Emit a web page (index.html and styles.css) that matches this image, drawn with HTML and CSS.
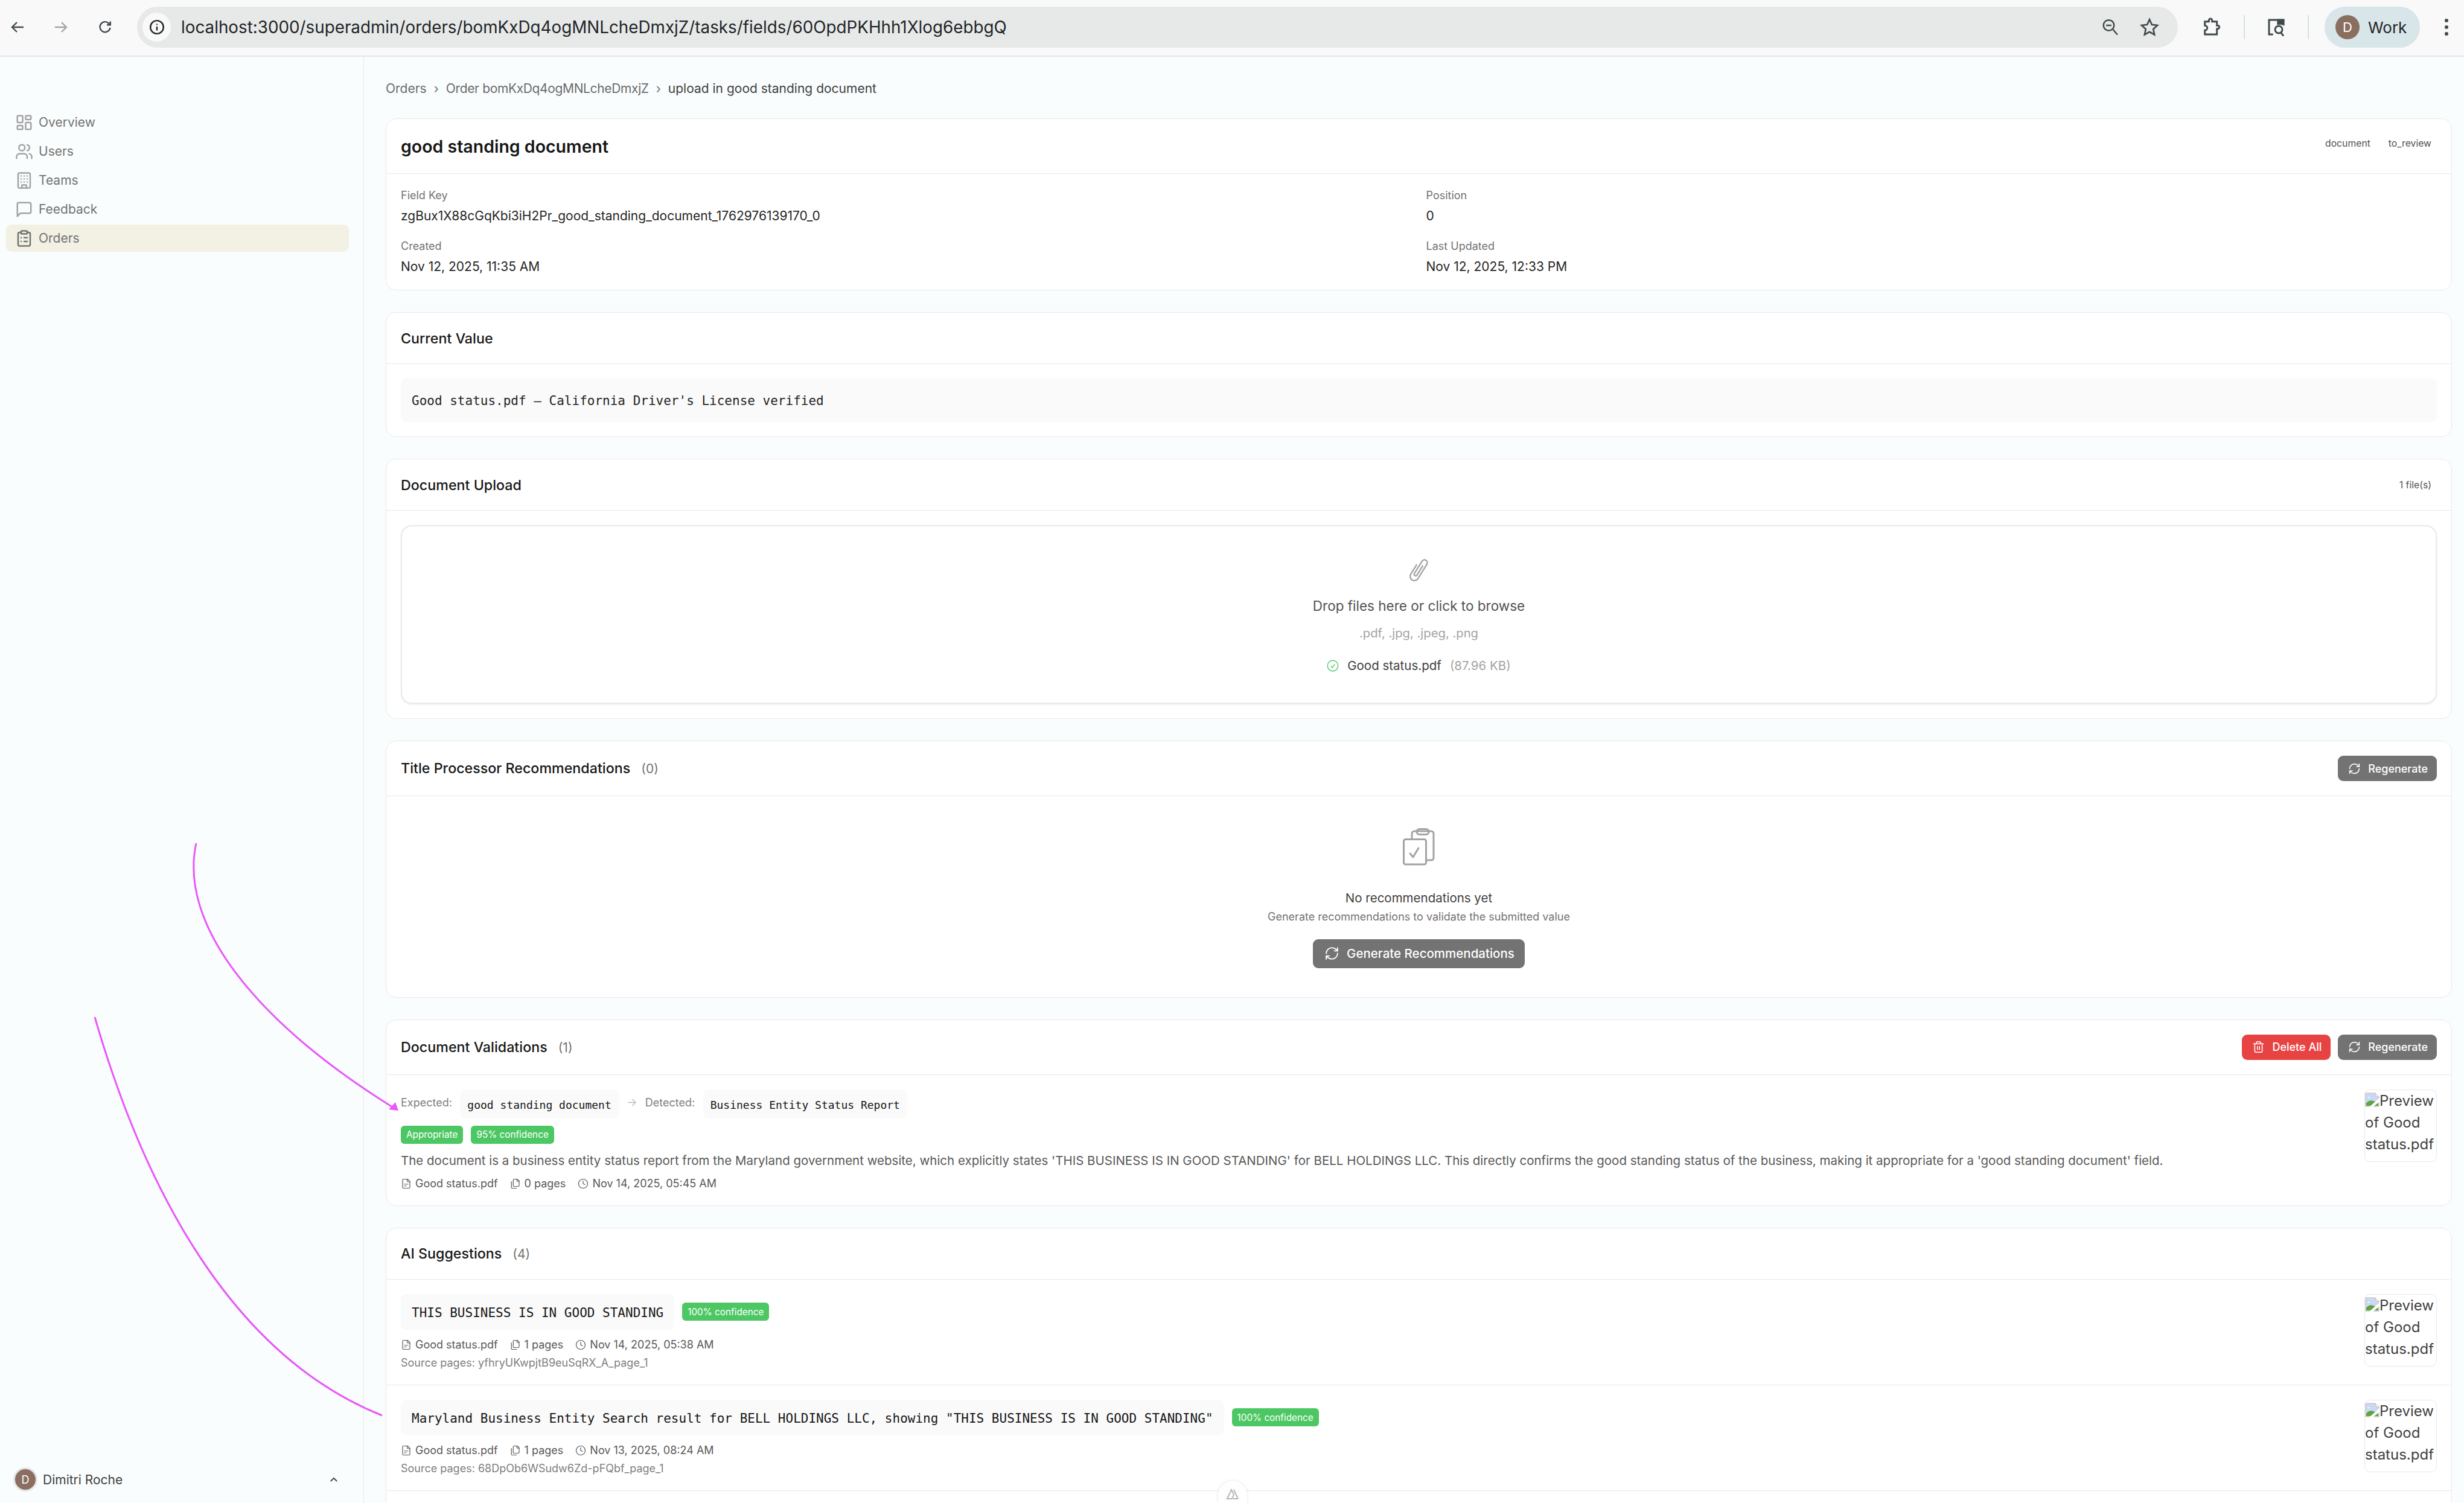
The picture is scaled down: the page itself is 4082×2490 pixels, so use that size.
FILE: index.html
```html
<!DOCTYPE html>
<html lang="en">
<head>
<meta charset="utf-8">
<title>good standing document</title>
<link rel="stylesheet" href="styles.css">
</head>
<body>
<svg width="0" height="0" class="defs">
  <defs>
    <symbol id="i-refresh" viewBox="0 0 24 24"><path d="M3 12a9 9 0 0 1 9-9 9.75 9.75 0 0 1 6.74 2.74L21 8"/><path d="M21 3v5h-5"/><path d="M21 12a9 9 0 0 1-9 9 9.75 9.75 0 0 1-6.74-2.74L3 16"/><path d="M8 16H3v5"/></symbol>
    <symbol id="i-file" viewBox="0 0 24 24"><path d="M15 2H6a2 2 0 0 0-2 2v16a2 2 0 0 0 2 2h12a2 2 0 0 0 2-2V7Z"/><path d="M14 2v4a2 2 0 0 0 2 2h4"/><path d="M16 13H8"/><path d="M12 17H8"/></symbol>
    <symbol id="i-files" viewBox="0 0 24 24"><path d="M20 7h-3a2 2 0 0 1-2-2V2"/><path d="M9 18a2 2 0 0 1-2-2V4a2 2 0 0 1 2-2h7l4 4v10a2 2 0 0 1-2 2Z"/><path d="M3 7.6v12.8A1.6 1.6 0 0 0 4.6 22h9.8"/></symbol>
    <symbol id="i-clock" viewBox="0 0 24 24"><circle cx="12" cy="12" r="10"/><path d="M12 6v6l4 2"/></symbol>
    <symbol id="i-broken" viewBox="0 0 24 24"><path d="M1 1h16l6 6v16H1z" fill="#fff" stroke="#a8a8a8" stroke-width="1"/><path d="M17 1v6h6" fill="#eee" stroke="#a8a8a8" stroke-width="1"/><path d="M2 2h14v6h6v7H2z" fill="#c9d8f8"/><path d="M2 22v-5c4-4 9-5 14-2l6 3v4z" fill="#5fa43f"/><path d="M4 9c1-2 4-2 5 0z" fill="#fff"/><path d="M24 9 7 24h6l11-9z" fill="#fff"/></symbol>
  </defs>
</svg>

<header class="chrome">
  <svg class="cicon" viewBox="0 0 24 24"><path d="M22 12H3M11 4l-8 8 8 8"/></svg>
  <svg class="cicon cicon-off" viewBox="0 0 24 24"><path d="M2 12h19M13 4l8 8-8 8"/></svg>
  <svg class="cicon cicon-reload" viewBox="0 0 24 24"><path d="M20.5 13a8.5 8.5 0 1 1-2.4-7.4L20.5 8"/><path d="M20.8 2.5V8.3H15"/></svg>
  <div class="omnibox">
    <span class="site-chip"><svg class="site-icon" viewBox="0 0 24 24"><circle cx="12" cy="12" r="10"/><path d="M12 11v6M12 7v1.5"/></svg></span>
    <span class="url">localhost:3000/superadmin/orders/bomKxDq4ogMNLcheDmxjZ/tasks/fields/60OpdPKHhh1Xlog6ebbgQ</span>
    <svg class="cicon omni-zoom" viewBox="0 0 24 24"><circle cx="10" cy="9.5" r="7"/><path d="M15.5 15l6 7M6.5 9.5h7"/></svg>
    <svg class="cicon omni-star" viewBox="0 0 24 24"><path d="M12 2.5l2.9 6.4 6.9.8-5.1 4.700 1.400 6.900-6.100-3.500-6.100 3.500 1.400-6.900-5.100-4.700 6.900-.8z"/></svg>
  </div>
  <svg class="cicon tool-ext" viewBox="0 0 24 24"><path d="M5 5h5V3.500a2 2 0 0 1 4 0V5h6v5h1a2 2 0 0 1 0 4h-1v7H5v-5a2.500 2.500 0 0 0 0-6z"/></svg>
  <span class="tool-sep"></span>
  <svg class="cicon tool-media" viewBox="0 0 24 24"><path d="M8 21H3V3h18v7"/><path d="M13 2h9v7h-9z" class="solid"/><circle cx="15" cy="15" r="4.500"/><path d="M18 19l3 4"/></svg>
  <span class="tool-sep tool-sep-b"></span>
  <div class="profile"><span class="profile-avatar">D</span><span class="profile-name">Work</span></div>
  <div class="dots"><span></span><span></span><span></span></div>
</header>

<div class="app">
  <aside class="sidebar">
    <nav class="nav">
      <a class="nav-item"><svg class="nav-icon" viewBox="0 0 24 24"><rect x="3" y="3" width="7" height="9" rx="1"/><rect x="14" y="3" width="7" height="5" rx="1"/><rect x="14" y="12" width="7" height="9" rx="1"/><rect x="3" y="16" width="7" height="5" rx="1"/></svg>Overview</a>
      <a class="nav-item"><svg class="nav-icon" viewBox="0 0 24 24"><path d="M16 21v-2a4 4 0 0 0-4-4H6a4 4 0 0 0-4 4v2"/><circle cx="9" cy="7" r="4"/><path d="M22 21v-2a4 4 0 0 0-3-3.870"/><path d="M16 3.130a4 4 0 0 1 0 7.750"/></svg>Users</a>
      <a class="nav-item"><svg class="nav-icon" viewBox="0 0 24 24"><rect x="4" y="2" width="16" height="20" rx="2"/><path d="M9 22v-4h6v4M8 6h.01M16 6h.01M12 6h.01M12 10h.01M12 14h.01M16 10h.01M16 14h.01M8 10h.01M8 14h.01"/></svg>Teams</a>
      <a class="nav-item"><svg class="nav-icon" viewBox="0 0 24 24"><path d="M21 15a2 2 0 0 1-2 2H7l-4 4V5a2 2 0 0 1 2-2h14a2 2 0 0 1 2 2z"/></svg>Feedback</a>
      <a class="nav-item nav-active"><svg class="nav-icon" viewBox="0 0 24 24"><rect x="8" y="2" width="8" height="4" rx="1"/><path d="M16 4h2a2 2 0 0 1 2 2v14a2 2 0 0 1-2 2H6a2 2 0 0 1-2-2V6a2 2 0 0 1 2-2h2"/><path d="M12 11h4M12 16h4M8 11h.01M8 16h.01"/></svg>Orders</a>
    </nav>
    <div class="user">
      <span class="user-avatar">D</span>
      <span class="user-name">Dimitri Roche</span>
      <svg class="user-chevron" viewBox="0 0 24 24"><path d="M5 16l7-7 7 7"/></svg>
    </div>
  </aside>

  <main class="main">
    <div class="crumbs"><span>Orders</span><i>›</i><span class="crumb-id">Order bomKxDq4ogMNLcheDmxjZ</span><i>›</i><span class="crumb-now">upload in good standing document</span></div>

    <section class="card">
      <div class="card-head head-top">
        <h1 class="page-title">good standing document</h1>
        <div class="tags"><span class="tag">document</span><span class="tag">to_review</span></div>
      </div>
      <div class="info-grid">
        <div><div class="lbl">Field Key</div><div class="val">zgBux1X88cGqKbi3iH2Pr_good_standing_document_1762976139170_0</div></div>
        <div><div class="lbl">Position</div><div class="val">0</div></div>
        <div><div class="lbl">Created</div><div class="val">Nov 12, 2025, 11:35 AM</div></div>
        <div><div class="lbl">Last Updated</div><div class="val">Nov 12, 2025, 12:33 PM</div></div>
      </div>
    </section>

    <section class="card">
      <div class="card-head"><h2 class="card-title">Current Value</h2></div>
      <div class="card-body"><div class="value-box">Good status.pdf – California Driver's License verified</div></div>
    </section>

    <section class="card">
      <div class="card-head"><h2 class="card-title">Document Upload</h2><span class="tag">1 file(s)</span></div>
      <div class="card-body">
        <div class="drop">
          <svg class="clip" viewBox="0 0 37 42"><path transform="translate(18.500 21) rotate(32)" d="M2.500-8V10a2.500 2.500 0 0 1-5 0V-14a4.750 4.750 0 0 1 9.500 0V14a7 7 0 0 1-14 0V-4"/></svg>
          <div class="drop-title">Drop files here or click to browse</div>
          <div class="drop-types">.pdf, .jpg, .jpeg, .png</div>
          <div class="drop-file">
            <svg class="ok" viewBox="0 0 24 24"><circle cx="12" cy="12" r="10.500"/><path d="M8 12.500l3 3 5-6.500"/></svg>
            <span>Good status.pdf</span><span class="drop-size">(87.96 KB)</span>
          </div>
        </div>
      </div>
    </section>

    <section class="card">
      <div class="card-head head-btn">
        <h2 class="card-title">Title Processor Recommendations<span class="count">(0)</span></h2>
        <div class="btns"><button class="btn"><svg class="btn-icon"><use href="#i-refresh"/></svg>Regenerate</button></div>
      </div>
      <div class="empty">
        <svg class="empty-icon" viewBox="0 0 53 62"><path d="M15 18V9a4 4 0 0 1 4-4h28a4 4 0 0 1 4 4v40a4 4 0 0 1-4 4h-8"/><rect x="23" y="1.500" width="20" height="9" rx="4.500"/><rect x="1.500" y="18.500" width="37" height="41.500" rx="3"/><path d="M12 42l5 6 9-15"/></svg>
        <div class="empty-title">No recommendations yet</div>
        <div class="empty-sub">Generate recommendations to validate the submitted value</div>
        <button class="btn btn-lg"><svg class="btn-icon btn-icon-lg"><use href="#i-refresh"/></svg>Generate Recommendations</button>
      </div>
    </section>

    <section class="card">
      <div class="card-head head-btn">
        <h2 class="card-title">Document Validations<span class="count">(1)</span></h2>
        <div class="btns">
          <button class="btn btn-red"><svg class="btn-icon" viewBox="0 0 24 24"><path d="M3 6h18"/><path d="M19 6v14c0 1-1 2-2 2H7c-1 0-2-1-2-2V6"/><path d="M8 6V4c0-1 1-2 2-2h4c1 0 2 1 2 2v2"/><path d="M10 11v6M14 11v6"/></svg>Delete All</button>
          <button class="btn"><svg class="btn-icon"><use href="#i-refresh"/></svg>Regenerate</button>
        </div>
      </div>
      <div class="row">
        <div class="row-main">
          <div class="compare">
            <span class="compare-lbl">Expected:</span><code class="chip">good standing document</code>
            <svg class="compare-arrow" viewBox="0 0 24 24"><path d="M3 12h18M13 4l8 8-8 8"/></svg>
            <span class="compare-lbl">Detected:</span><code class="chip">Business Entity Status Report</code>
          </div>
          <div class="badges"><span class="badge">Appropriate</span><span class="badge">95% confidence</span></div>
          <p class="reason">The document is a business entity status report from the Maryland government website, which explicitly states 'THIS BUSINESS IS IN GOOD STANDING' for BELL HOLDINGS LLC. This directly confirms the good standing status of the business, making it appropriate for a 'good standing document' field.</p>
          <div class="meta">
            <span class="meta-item"><svg class="meta-icon"><use href="#i-file"/></svg>Good status.pdf</span>
            <span class="meta-item"><svg class="meta-icon"><use href="#i-files"/></svg>0 pages</span>
            <span class="meta-item"><svg class="meta-icon"><use href="#i-clock"/></svg>Nov 14, 2025, 05:45 AM</span>
          </div>
        </div>
        <div class="thumb"><svg class="broken"><use href="#i-broken"/></svg>Preview of Good status.pdf</div>
      </div>
    </section>

    <section class="card card-last">
      <div class="card-head"><h2 class="card-title">AI Suggestions<span class="count">(4)</span></h2></div>
      <div class="row row-line">
        <div class="row-main">
          <div class="suggest"><code class="chip chip-lg">THIS BUSINESS IS IN GOOD STANDING</code><span class="badge">100% confidence</span></div>
          <div class="meta meta-s">
            <span class="meta-item"><svg class="meta-icon"><use href="#i-file"/></svg>Good status.pdf</span>
            <span class="meta-item"><svg class="meta-icon"><use href="#i-files"/></svg>1 pages</span>
            <span class="meta-item"><svg class="meta-icon"><use href="#i-clock"/></svg>Nov 14, 2025, 05:38 AM</span>
          </div>
          <div class="source">Source pages: yfhryUKwpjtB9euSqRX_A_page_1</div>
        </div>
        <div class="thumb"><svg class="broken"><use href="#i-broken"/></svg>Preview of Good status.pdf</div>
      </div>
      <div class="row row-line">
        <div class="row-main">
          <div class="suggest"><code class="chip chip-lg">Maryland Business Entity Search result for BELL HOLDINGS LLC, showing "THIS BUSINESS IS IN GOOD STANDING"</code><span class="badge">100% confidence</span></div>
          <div class="meta meta-s">
            <span class="meta-item"><svg class="meta-icon"><use href="#i-file"/></svg>Good status.pdf</span>
            <span class="meta-item"><svg class="meta-icon"><use href="#i-files"/></svg>1 pages</span>
            <span class="meta-item"><svg class="meta-icon"><use href="#i-clock"/></svg>Nov 13, 2025, 08:24 AM</span>
          </div>
          <div class="source">Source pages: 68DpOb6WSudw6Zd-pFQbf_page_1</div>
        </div>
        <div class="thumb"><svg class="broken"><use href="#i-broken"/></svg>Preview of Good status.pdf</div>
      </div>
    </section>
  </main>
</div>

<div class="dev-tab"><svg viewBox="0 0 24 24"><path d="M3 20 10 5l4 8-3 7zM21 20 14 5"/><path d="M13 20h8"/></svg></div>

<svg class="annot" viewBox="0 0 4082 2490">
  <path d="M325 1397C296 1530 420 1690 650 1834"/>
  <polygon points="660,1840 655,1826 644,1838"/>
  <path d="M157 1685C215 1885 345 2230 633 2345"/>
</svg>
</body>
</html>
```

FILE: styles.css
```css
* { box-sizing: border-box; }
html, body { margin: 0; padding: 0; }
body {
  width: 4082px; height: 2490px; overflow: hidden; position: relative;
  background: #f9fdfe; color: #171717;
  font-family: Inter, "Liberation Sans", sans-serif;
}
.defs { position: absolute; }
svg { display: block; flex: none; }
symbol { overflow: visible; }

/* browser toolbar */
.chrome {
  height: 94px; display: flex; align-items: center; padding: 0 0 2px 17px;
  background: #f9f9f9; border-bottom: 2px solid #e3e5e5;
}
.cicon { width: 24px; height: 24px; fill: none; stroke: #3f4a4c; stroke-width: 2.4; margin-right: 48px; }
.cicon-off { stroke: #a0a5a5; margin-right: 49px; }
.cicon-reload { margin-right: 41px; }
.omnibox {
  width: 3381px; height: 68px; border-radius: 34px; background: #e7e9e8;
  display: flex; align-items: center; padding-left: 9px;
}
.site-chip { width: 47px; height: 48px; border-radius: 50%; background: #f9f9f9; display: flex; align-items: center; justify-content: center; }
.site-icon { width: 26px; height: 26px; fill: none; stroke: #1f2528; stroke-width: 2.2; }
.url { margin-left: 17px; flex: 1; font-size: 27.8px; color: #1f2528; white-space: nowrap; }
.omni-zoom { width: 30px; height: 30px; stroke-width: 2; margin-right: 34px; }
.omni-star { width: 32px; height: 32px; stroke-width: 2; margin-right: 31px; }
.tool-ext { width: 32px; height: 32px; stroke-width: 2.2; margin: 0 39px 0 38px; }
.tool-sep { width: 2px; height: 40px; background: #d5e2e6; }
.tool-media { width: 32px; height: 32px; stroke-width: 2.2; margin: 0 36px; }
.tool-media .solid { fill: #3f4a4c; stroke: none; }
.tool-sep-b { margin-right: 26px; }
.profile {
  width: 158px; height: 68px; border-radius: 34px; background: #d8e5e9;
  display: flex; align-items: center; padding-left: 18px;
}
.profile-avatar { width: 40px; height: 40px; border-radius: 50%; background: #8a6e60; color: #fff; font-size: 22px; display: flex; align-items: center; justify-content: center; }
.profile-name { margin-left: 14px; font-size: 26px; color: #1f2528; }
.dots { margin-left: 38px; width: 12px; display: flex; flex-direction: column; align-items: center; gap: 5px; }
.dots span { width: 6px; height: 6px; border-radius: 50%; background: #3f4a4c; }

/* shell */
.app { display: flex; height: 2396px; }
.sidebar {
  width: 603px; flex: none; border-right: 1px solid #e6e9ea; padding: 86px 24px 0 10px;
  display: flex; flex-direction: column; justify-content: space-between;
}
.nav { display: flex; flex-direction: column; gap: 3px; }
.nav-item { height: 45px; display: flex; align-items: center; gap: 9px; padding-left: 15px; border-radius: 9px; font-size: 21px; color: #737373; }
.nav-active { background: #f2f1e4; }
.nav-active .nav-icon { stroke: #737373; }
.nav-icon { width: 30px; height: 30px; fill: none; stroke: #a3a3a3; stroke-width: 2; stroke-linecap: round; stroke-linejoin: round; }
.user { display: flex; align-items: center; height: 46px; margin: 0 0 16px 12px; gap: 9px; }
.user-avatar { width: 40px; height: 40px; border-radius: 50%; background: #8a6e60; border: 3px solid #e5e5e5; color: #fff; font-size: 18px; display: flex; align-items: center; justify-content: center; }
.user-name { font-size: 21px; color: #404040; flex: 1; }
.user-chevron { width: 18px; height: 18px; fill: none; stroke: #404040; stroke-width: 2.4; margin-right: 16px; }

.main { flex: 1; min-width: 0; padding: 36px 20px 0 36px; overflow: hidden; }
.crumbs { height: 32px; margin-bottom: 34px; display: flex; align-items: center; gap: 12px; font-size: 21px; color: #6b6b6b; }
.crumbs i { font-style: normal; color: #737373; }
.crumb-id { letter-spacing: -.36px; }
.crumb-now { color: #404040; }

.card { background: #fff; border: 1px solid #e8e9e9; border-radius: 18px; margin-bottom: 36px; overflow: hidden; }
.card-last { height: 640px; margin-bottom: 0; }
.card-head { display: flex; justify-content: space-between; align-items: center; padding: 24px; border-bottom: 1px solid #e8e9e9; height: 85px; }
.head-btn { height: 91px; }
.head-top { height: 91px; align-items: flex-start; }
.page-title { margin: 1px 0 0; font-size: 28.5px; line-height: 42px; font-weight: 600; }
.card-title { margin: 1px 0 0; font-size: 23.25px; line-height: 36px; font-weight: 500; }
.count { margin-left: 18px; font-size: 21px; font-weight: 400; color: #737373; }
.tags { display: flex; gap: 12px; margin-top: 1px; }
.tag { height: 30px; padding: 0 9px; display: inline-flex; align-items: center; font-size: 15.75px; color: #525252; }

.info-grid { display: grid; grid-template-columns: 1fr 1fr; column-gap: 24px; row-gap: 21px; padding: 22px 24px 23px; }
.lbl { font-size: 18px; line-height: 27px; color: #737373; margin-bottom: 4.5px; }
.val { font-size: 21px; line-height: 31.5px; color: #262626; }

.card-body { padding: 24px; }
.value-box { height: 72px; padding: 3px 18px 0; border-radius: 9px; background: #fafafa; display: flex; align-items: center; font: 21px/31.5px "DejaVu Sans Mono", monospace; color: #262626; }

.drop {
  height: 296px; border: 2px solid #e8e8e8; border-radius: 18px; padding-top: 50px; box-shadow: 0 2px 3px rgba(0,0,0,.05);
  display: flex; flex-direction: column; align-items: center;
}
.clip { width: 37px; height: 42px; overflow: visible; fill: none; stroke: #a3a3a3; stroke-width: 2.4; stroke-linecap: round; }
.drop-title { margin-top: 22px; font-size: 22.5px; line-height: 36px; color: #525252; }
.drop-types { margin-top: 13px; font-size: 20.25px; line-height: 27px; color: #a3a3a3; }
.drop-file { margin-top: 25px; display: flex; align-items: center; font-size: 20.5px; line-height: 31.5px; color: #404040; }
.ok { width: 20px; height: 20px; margin-right: 14px; fill: none; stroke: #4dc764; stroke-width: 1.6; }
.drop-size { margin-left: 14px; color: #a3a3a3; }

.btns { display: flex; gap: 12px; }
.btn {
  height: 42px; padding: 0 15px 0 17px; border: 0; border-radius: 9px; background: #737373; color: #fff;
  display: flex; align-items: center; gap: 12px; font: 500 18px Inter, sans-serif;
}
.btn-red { background: #e84343; }
.btn-lg { height: 48px; gap: 12px; padding: 0 17px 0 19px; font-size: 20.5px; margin-top: 23.5px; }
.btn-icon { width: 21px; height: 21px; fill: none; stroke: #fff; stroke-width: 1.8; stroke-linecap: round; stroke-linejoin: round; }
.btn-icon-lg { width: 25px; height: 25px; }

.empty { padding: 53px 0 48px; display: flex; flex-direction: column; align-items: center; }
.empty-icon { width: 53px; height: 62px; fill: none; stroke: #a3a3a3; stroke-width: 3; stroke-linecap: round; stroke-linejoin: round; }
.empty-title { margin-top: 38px; font-size: 20.5px; line-height: 31.5px; color: #404040; }
.empty-sub { margin-top: 1.5px; font-size: 18px; line-height: 27px; color: #737373; }

.row { display: flex; justify-content: space-between; gap: 24px; padding: 24px 24px 22.5px; }
.row-line { height: 175px; border-bottom: 1px solid #e8e9e9; }
.row-main { flex: 1; min-width: 0; }
.compare { display: flex; align-items: center; gap: 13.5px; height: 48px; font-size: 18px; color: #808080; }
.compare-lbl { margin-top: -4px; }
.chip { height: 48px; padding: 3px 12px 0; border-radius: 9px; background: #fafafa; display: flex; align-items: center; font: 18px "DejaVu Sans Mono", monospace; color: #171717; }
.chip-lg { height: 59px; padding: 3px 18px 0; font-size: 21px; }
.compare-arrow { width: 17px; height: 17px; fill: none; stroke: #bdbdbd; stroke-width: 2; margin-top: -4px; }
.badges { display: flex; gap: 13px; margin-top: 12px; }
.badge { height: 30px; padding: 0 9px; border-radius: 6px; background: #4dc764; color: #fff; font-size: 15.3px; display: inline-flex; align-items: center; }
.reason { margin: 13px 0 0; font-size: 20.5px; line-height: 30px; color: #595959; }
.meta { display: flex; gap: 20px; margin-top: 9.5px; font-size: 18px; line-height: 27px; color: #595959; }
.meta-s { margin-top: 11.5px; }
.meta-item { display: flex; align-items: center; gap: 6px; }
.meta-icon { width: 18px; height: 18px; fill: none; stroke: #595959; stroke-width: 1.6; stroke-linecap: round; stroke-linejoin: round; }
.source { margin-top: 3px; font-size: 18px; line-height: 27px; color: #808080; }
.suggest { display: flex; align-items: center; gap: 13px; }

.thumb { width: 120px; height: 120px; flex: none; border: 1px solid #e8e9e9; border-radius: 9px; overflow: hidden; font-size: 24px; line-height: 36px; color: #404040; }
.broken { display: inline-block; width: 24px; height: 24px; vertical-align: -2px; }

.dev-tab {
  position: absolute; left: 2018px; top: 2453px; width: 48px; height: 37px;
  background: #fff; border-radius: 24px 24px 0 0; box-shadow: 0 0 4px rgba(0,0,0,.12);
  display: flex; justify-content: center; padding-top: 10px;
}
.dev-tab svg { width: 26px; height: 24px; fill: none; stroke: #b5b5b5; stroke-width: 2; }

.annot { position: absolute; left: 0; top: 0; width: 4082px; height: 2490px; pointer-events: none; }
.annot path { fill: none; stroke: #e957fb; stroke-width: 3; }
.annot polygon { fill: #e957fb; }
```
